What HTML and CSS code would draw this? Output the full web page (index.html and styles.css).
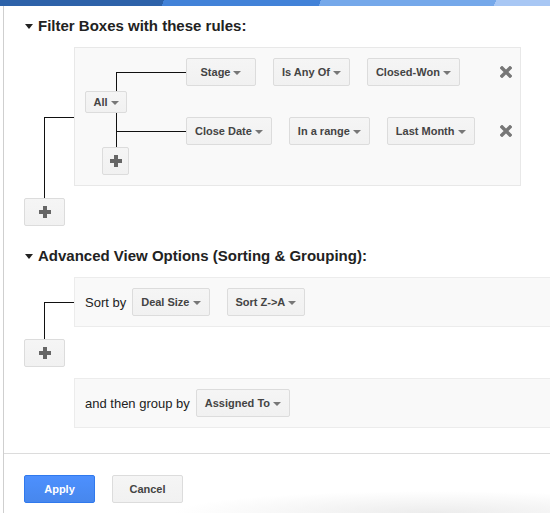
FILE: index.html
```html
<!DOCTYPE html>
<html>
<head>
<meta charset="utf-8">
<link rel="stylesheet" href="styles.css">
</head>
<body>
<div class="topbar"></div>
<div class="dialog">
  <div class="content">
    <h2 class="section-title"><span class="caret"></span>Filter Boxes with these rules:</h2>
    <div class="tree-row">
      <div class="connector connector-filter"></div>
      <div class="filter-box">
        <button class="btn btn-op">All<span class="arrow"></span></button>
        <div class="rules">
          <div class="rule">
            <button class="btn field">Stage<span class="arrow"></span></button>
            <button class="btn">Is Any Of<span class="arrow"></span></button>
            <button class="btn">Closed-Won<span class="arrow"></span></button>
            <svg class="remove" width="12" height="12" viewBox="0 0 12 12"><path d="M2 2L10 10M10 2L2 10" stroke="#777" stroke-width="3.4" stroke-linecap="square"/></svg>
          </div>
          <div class="rule">
            <button class="btn field">Close Date<span class="arrow"></span></button>
            <button class="btn">In a range<span class="arrow"></span></button>
            <button class="btn">Last Month<span class="arrow"></span></button>
            <svg class="remove" width="12" height="12" viewBox="0 0 12 12"><path d="M2 2L10 10M10 2L2 10" stroke="#777" stroke-width="3.4" stroke-linecap="square"/></svg>
          </div>
          <button class="btn add add-small"><svg width="12" height="12" viewBox="0 0 12 12"><rect x="0" y="4" width="12" height="4" fill="#666"/><rect x="4" y="0" width="4" height="12" fill="#666"/></svg></button>
        </div>
      </div>
    </div>
    <button class="btn add add-wide"><svg width="12" height="12" viewBox="0 0 12 12"><rect x="0" y="4" width="12" height="4" fill="#666"/><rect x="4" y="0" width="4" height="12" fill="#666"/></svg></button>

    <h2 class="section-title second"><span class="caret"></span>Advanced View Options (Sorting &amp; Grouping):</h2>
    <div class="tree-row">
      <div class="connector connector-sort"></div>
      <div class="option-box">
        <span class="label">Sort by</span>
        <button class="btn">Deal Size<span class="arrow"></span></button>
        <button class="btn">Sort Z-&gt;A<span class="arrow"></span></button>
      </div>
    </div>
    <button class="btn add add-wide"><svg width="12" height="12" viewBox="0 0 12 12"><rect x="0" y="4" width="12" height="4" fill="#666"/><rect x="4" y="0" width="4" height="12" fill="#666"/></svg></button>
    <div class="option-box group-box">
      <span class="label">and then group by</span>
      <button class="btn">Assigned To<span class="arrow"></span></button>
    </div>
  </div>
  <div class="footer">
    <button class="btn btn-action btn-primary">Apply</button>
    <button class="btn btn-action">Cancel</button>
  </div>
</div>
</body>
</html>
```

FILE: styles.css
```css
html, body {
  margin: 0;
  padding: 0;
  background: #fff;
  overflow: hidden;
}

body {
  font-family: "Liberation Sans", Arial, sans-serif;
  color: #222;
  width: 550px;
  height: 513px;
}

.topbar {
  height: 6px;
  background: linear-gradient(115deg,
    #2d62a9 0%, #2d62a9 29.7%,
    #4282d8 29.7%, #4282d8 58.1%,
    #75a8ea 58.1%, #75a8ea 89.8%,
    #a8c7f4 89.8%, #a8c7f4 100%);
}

.dialog {
  margin-left: 3px;
  border-left: 1px solid #cfcfcf;
  width: 570px;
  height: 507px;
  display: flex;
  flex-direction: column;
}

.content {
  padding: 0 0 25px 20px;
}

.section-title {
  margin: 11px 0 12px 0;
  padding-left: 1px;
  font-size: 15px;
  line-height: 18px;
  font-weight: bold;
  color: #222;
  display: flex;
  align-items: center;
}

.section-title.second {
  margin-top: 21px;
}

.caret {
  width: 0;
  height: 0;
  border-left: 4px solid transparent;
  border-right: 4px solid transparent;
  border-top: 5px solid #222;
  margin-right: 5px;
}

.tree-row {
  display: flex;
  align-items: flex-start;
}

.connector {
  box-sizing: border-box;
  width: 30px;
  margin-left: 20px;
  border-top: 1px solid #111;
  border-left: 1px solid #111;
  flex: none;
}

.connector-filter {
  margin-top: 70px;
  height: 81px;
}

.connector-sort {
  margin-top: 25px;
  height: 37px;
}

.filter-box {
  box-sizing: border-box;
  width: 447px;
  padding: 10px 8px 10px 10px;
  background: #f9f9f9;
  border: 1px solid #e8e8e8;
  display: flex;
  align-items: flex-start;
}

.btn {
  box-sizing: border-box;
  margin: 0;
  height: 28px;
  padding: 0 8px;
  display: inline-flex;
  align-items: center;
  justify-content: center;
  font-family: "Liberation Sans", Arial, sans-serif;
  font-size: 11px;
  font-weight: bold;
  color: #444;
  background: linear-gradient(#f5f5f5, #f1f1f1);
  border: 1px solid #dcdcdc;
  border-radius: 2px;
  white-space: nowrap;
  flex: none;
}

.arrow {
  width: 0;
  height: 0;
  margin-left: 3px;
  margin-top: 1px;
  border-left: 4px solid transparent;
  border-right: 4px solid transparent;
  border-top: 4px solid #777;
}

.btn-op {
  width: 42px;
  padding: 0;
  height: 22px;
  margin-top: 33px;
  position: relative;
  z-index: 1;
}

.rules {
  flex: 1;
  margin-left: -11px;
  position: relative;
  display: flex;
  flex-direction: column;
  align-items: flex-start;
}

.rules::before {
  content: "";
  position: absolute;
  left: 0;
  top: 14px;
  bottom: 28px;
  width: 1px;
  background: #111;
}

.rule {
  position: relative;
  align-self: stretch;
  display: flex;
  align-items: center;
  padding-left: 70px;
  height: 28px;
}

.rule + .rule {
  margin-top: 31px;
}

.rule::before {
  content: "";
  position: absolute;
  left: 0;
  top: 14px;
  width: 70px;
  height: 1px;
  background: #111;
}

.rule .btn {
  margin-right: 17px;
}

.field {
  min-width: 70px;
}

.remove {
  margin-left: auto;
  display: block;
}

.add {
  padding: 0;
}

.add svg {
  display: block;
}

.add-small {
  width: 27px;
  margin-top: 2px;
  margin-left: -14px;
}

.add-wide {
  width: 41px;
}

.option-box {
  box-sizing: border-box;
  flex: 1;
  height: 50px;
  padding: 0 0 0 10px;
  background: #f9f9f9;
  border: 1px solid #ececec;
  border-right: 0;
  display: flex;
  align-items: center;
}

.option-box .label {
  font-size: 13px;
  color: #222;
  margin-right: 6px;
}

.option-box .btn + .btn {
  margin-left: 17px;
}

.group-box {
  margin-top: 11px;
  margin-left: 50px;
}

.footer {
  flex: 1;
  border-top: 1px solid #dcdcdc;
  padding: 21px 0 0 20px;
  display: flex;
  align-items: flex-start;
  background: radial-gradient(ellipse 260px 22px at 430px 100%, #ececec, rgba(255,255,255,0));
}

.btn-action {
  min-width: 71px;
  margin-right: 17px;
}

.btn-primary {
  color: #fff;
  background: linear-gradient(#4d90fe, #4787ed);
  border-color: #3079ed;
}
```
